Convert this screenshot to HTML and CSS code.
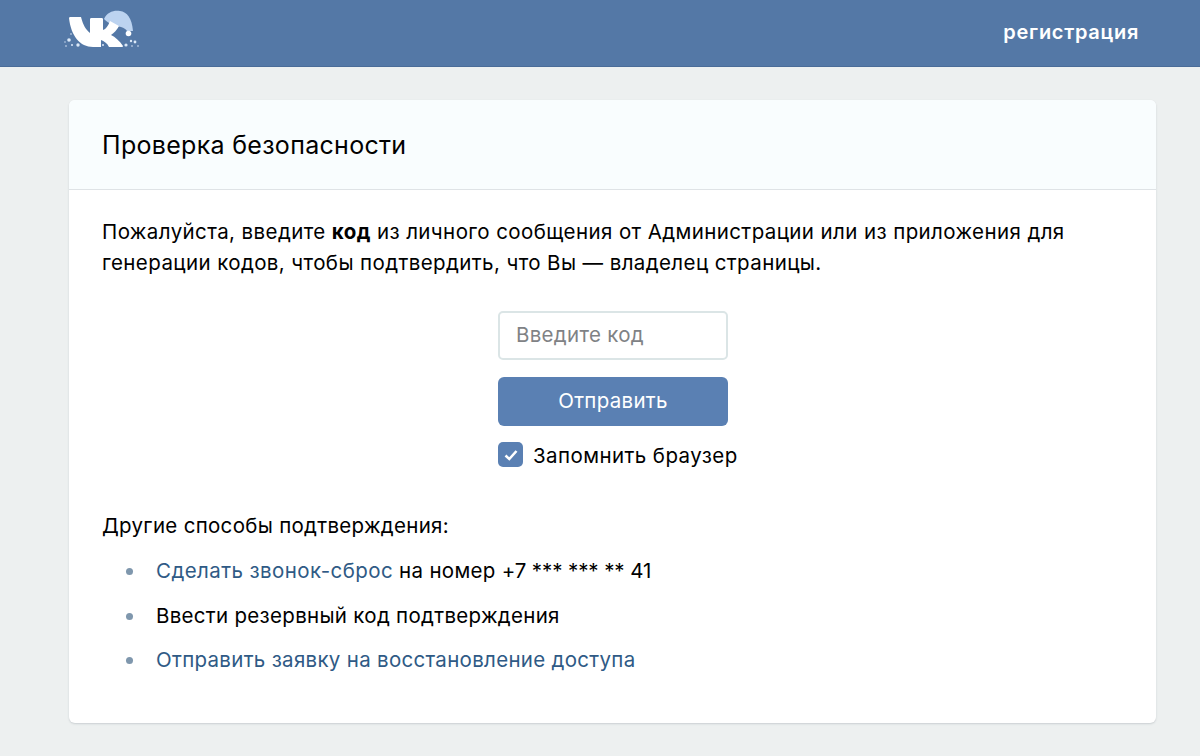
FILE: index.html
```html
<!DOCTYPE html>
<html lang="ru">
<head>
<meta charset="utf-8">
<title>Проверка безопасности</title>
<link rel="stylesheet" href="styles.css">
</head>
<body>
<header class="topbar">
  <svg class="logo" width="78" height="44" viewBox="64 8 78 44" aria-label="VK">
    <path class="hat" d="M104 19 C107 12 114 10 120 11 C127 12 132 18 133 31 L127 31 C126 29 124 28 121 27 C115 26 109 24 104 19 Z"/>
    <circle class="white" cx="128.500" cy="33.500" r="2.800"/>
    <path class="white" d="M69 18 C69 17 70 17 71 17 L81 17 C83 25 86 30 90 33 L90 19 C90 18 91 18 92 18 L102 18 C103 18 103 19 103 20 L103 30 C106 29 108 26 110 21 L119 26 C117 30 114 33 111 35 C115 37 120 41 123 46 C123 47 122 47 121 47 L109 47 C107 43 104 41 101 40 L101 47 L93 47 C80 47 71 36 69 18 Z"/>
    <g class="snow">
      <circle cx="69" cy="40" r="1.800"/><circle cx="71" cy="34" r=".8"/><circle cx="72" cy="45" r="1"/><circle cx="66" cy="46" r=".8"/>
      <circle cx="78" cy="45" r="1.700"/><circle cx="65" cy="42" r=".7"/><circle cx="103" cy="45" r="1"/><circle cx="126" cy="45" r="1.600"/>
      <circle cx="131" cy="41" r="1.200"/><circle cx="135" cy="42" r="1.400"/><circle cx="132" cy="46" r=".8"/><circle cx="138" cy="46" r=".8"/>
    </g>
  </svg>
  <a class="register" href="#">регистрация</a>
</header>
<main class="card">
  <h1 class="card-title">Проверка безопасности</h1>
  <section class="card-body">
    <p class="intro">Пожалуйста, введите <b>код</b> из личного сообщения от Администрации или из приложения для генерации кодов, чтобы подтвердить, что Вы — владелец страницы.</p>
    <form class="code-form">
      <input class="code-input" type="text" placeholder="Введите код">
      <button class="submit" type="button">Отправить</button>
      <label class="remember">
        <span class="checkbox"><svg width="16" height="16" viewBox="0 0 16 16"><path d="M2.500 8.500 L6.300 12 L13.500 4" fill="none" stroke="#fff" stroke-width="2.600"/></svg></span>
        <span class="remember-text">Запомнить браузер</span>
      </label>
    </form>
    <p class="other">Другие способы подтверждения:</p>
    <ul class="methods">
      <li><a class="call" href="#">Сделать звонок-сброс</a> на номер <span class="phone">+7 *** *** ** 41</span></li>
      <li>Ввести резервный код подтверждения</li>
      <li><a href="#">Отправить заявку на восстановление доступа</a></li>
    </ul>
  </section>
</main>
</body>
</html>
```
FILE: styles.css
```css
* { box-sizing: border-box; }
html, body { margin: 0; height: 100%; }
body {
  background: #edf0f0;
  color: #000;
  font-family: "Inter", "Liberation Sans", sans-serif;
  font-size: 20.500px;
  letter-spacing: .3px;
  overflow: hidden;
}
.topbar {
  height: 67px;
  background: #5478a6;
  border-bottom: 1px solid #4a6c98;
  padding: 0 61px 0 64px;
  display: flex;
  align-items: center;
  justify-content: space-between;
}
.logo { display: block; align-self: flex-start; margin-top: 8px; }
.hat { fill: #bcd3f0; }
.white { fill: #fff; }
.snow { fill: #dce9f8; }
.register {
  color: #fff;
  font-weight: 600;
  font-size: 20px;
  letter-spacing: .7px;
  text-decoration: none;
  margin-bottom: 2px;
}
.card {
  width: 1087px;
  height: 623px;
  margin: 33px 0 0 69px;
  background: #fff;
  border-radius: 6px;
  box-shadow: 0 1px 2px rgba(120,130,140,.3);
  overflow: hidden;
}
.card-title {
  margin: 0;
  height: 90px;
  padding: 0 33px;
  display: flex;
  align-items: center;
  font-size: 25px;
  letter-spacing: .3px;
  font-weight: 400;
  background: #f9fdfe;
  border-bottom: 1px solid #dfe3e6;
}
.card-body { padding: 26px 33px 0; }
.intro { margin: 0; line-height: 31px; letter-spacing: .4px; }
.code-form {
  width: 250px;
  margin: 33px 0 0 396px;
  display: flex;
  flex-direction: column;
}
.code-input {
  width: 230px;
  height: 49px;
  border: 2px solid #dbe5e6;
  border-radius: 5px;
  padding: 0 16px 2px;
  font: inherit;
  letter-spacing: inherit;
  background: #fff;
}
.code-input::placeholder { color: #7f8285; opacity: 1; }
.submit {
  width: 230px;
  height: 49px;
  margin-top: 17px;
  padding: 0 0 2px;
  border: 0;
  border-radius: 6px;
  background: #5a80b3;
  color: #fff;
  font: inherit;
  letter-spacing: inherit;
}
.remember {
  margin-top: 16px;
  display: flex;
  align-items: center;
  gap: 10px;
  white-space: nowrap;
  height: 25px;
  letter-spacing: .42px;
}
.remember-text { margin-top: 2px; }
.checkbox {
  width: 25px;
  height: 25px;
  border-radius: 5px;
  background: #5a80b3;
  display: flex;
  align-items: center;
  justify-content: center;
}
.other { margin: 47px 0 0; line-height: 24px; }
.methods {
  list-style: none;
  margin: 21px 0 0;
  padding: 0;
}
.methods li {
  position: relative;
  padding-left: 54px;
  height: 44.500px;
  line-height: 24px;
}
.methods li::before {
  content: "";
  position: absolute;
  left: 24px;
  top: 9px;
  width: 7px;
  height: 7px;
  border-radius: 50%;
  background: #7f97ad;
}
.methods a { color: #2f5a85; text-decoration: none; }
.methods .call { letter-spacing: .42px; }
.phone { letter-spacing: -.1px; }
```
